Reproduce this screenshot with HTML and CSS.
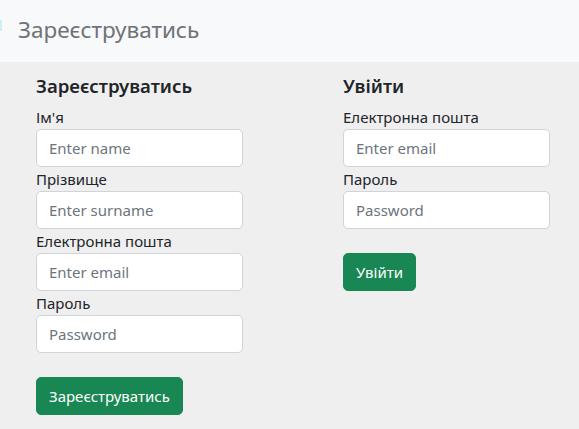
FILE: index.html
```html
<!DOCTYPE html>
<html lang="uk">
<head>
<meta charset="utf-8">
<link rel="stylesheet" href="styles.css">
</head>
<body>
<header class="navbar">
  <span class="nav-mark"></span>
  <span class="brand">Зареєструватись</span>
</header>
<main class="content">
  <form class="panel">
    <h5 class="panel-title">Зареєструватись</h5>
    <label class="field-label">Ім'я</label>
    <input class="field" type="text" placeholder="Enter name">
    <label class="field-label">Прізвище</label>
    <input class="field" type="text" placeholder="Enter surname">
    <label class="field-label">Електронна пошта</label>
    <input class="field" type="email" placeholder="Enter email">
    <label class="field-label">Пароль</label>
    <input class="field" type="password" placeholder="Password">
    <div class="actions"><button class="btn" type="button">Зареєструватись</button></div>
  </form>
  <form class="panel">
    <h5 class="panel-title">Увійти</h5>
    <label class="field-label">Електронна пошта</label>
    <input class="field" type="email" placeholder="Enter email">
    <label class="field-label">Пароль</label>
    <input class="field" type="password" placeholder="Password">
    <div class="actions"><button class="btn" type="button">Увійти</button></div>
  </form>
</main>
</body>
</html>
```
FILE: styles.css
```css
* { box-sizing: border-box; }
html, body { margin: 0; padding: 0; }
body {
  background: #efefef;
  font-family: "Noto Sans", "Open Sans", sans-serif;
  color: #212529;
  font-size: 16px;
  line-height: 1.5;
}
.navbar {
  height: 62px;
  background: #f8f9fa;
  display: flex;
  align-items: center;
  position: relative;
  padding-left: 18px;
}
.nav-mark {
  position: absolute;
  left: 0;
  top: 20px;
  width: 2px;
  height: 11px;
  background: #cdeff3;
}
.brand {
  font-size: 22.5px;
  color: #6f7378;
  line-height: 1.2;
  margin-top: -3px;
}
.content {
  display: grid;
  grid-template-columns: 207px 207px;
  column-gap: 100px;
  padding: 12px 0 0 36px;
}
.panel { display: flex; flex-direction: column; }
.panel-title {
  margin: 0 0 7px;
  font-size: 18.6px;
  font-weight: 600;
  line-height: 24px;
}
.field-label {
  display: block;
  font-size: 15px;
  line-height: 24px;
}
.field {
  display: block;
  width: 207px;
  height: 38px;
  padding: 6px 12px;
  font: inherit;
  font-size: 15px;
  color: #212529;
  background: #fff;
  border: 1px solid #ced4da;
  border-radius: 5px;
  outline: none;
}
.field::placeholder { color: #6c757d; }
.actions { margin-top: 24px; }
.btn {
  height: 38px;
  padding: 0 12px;
  font: inherit;
  font-size: 15px;
  color: #fff;
  background: #198754;
  border: 1px solid #198754;
  border-radius: 5px;
}
```
